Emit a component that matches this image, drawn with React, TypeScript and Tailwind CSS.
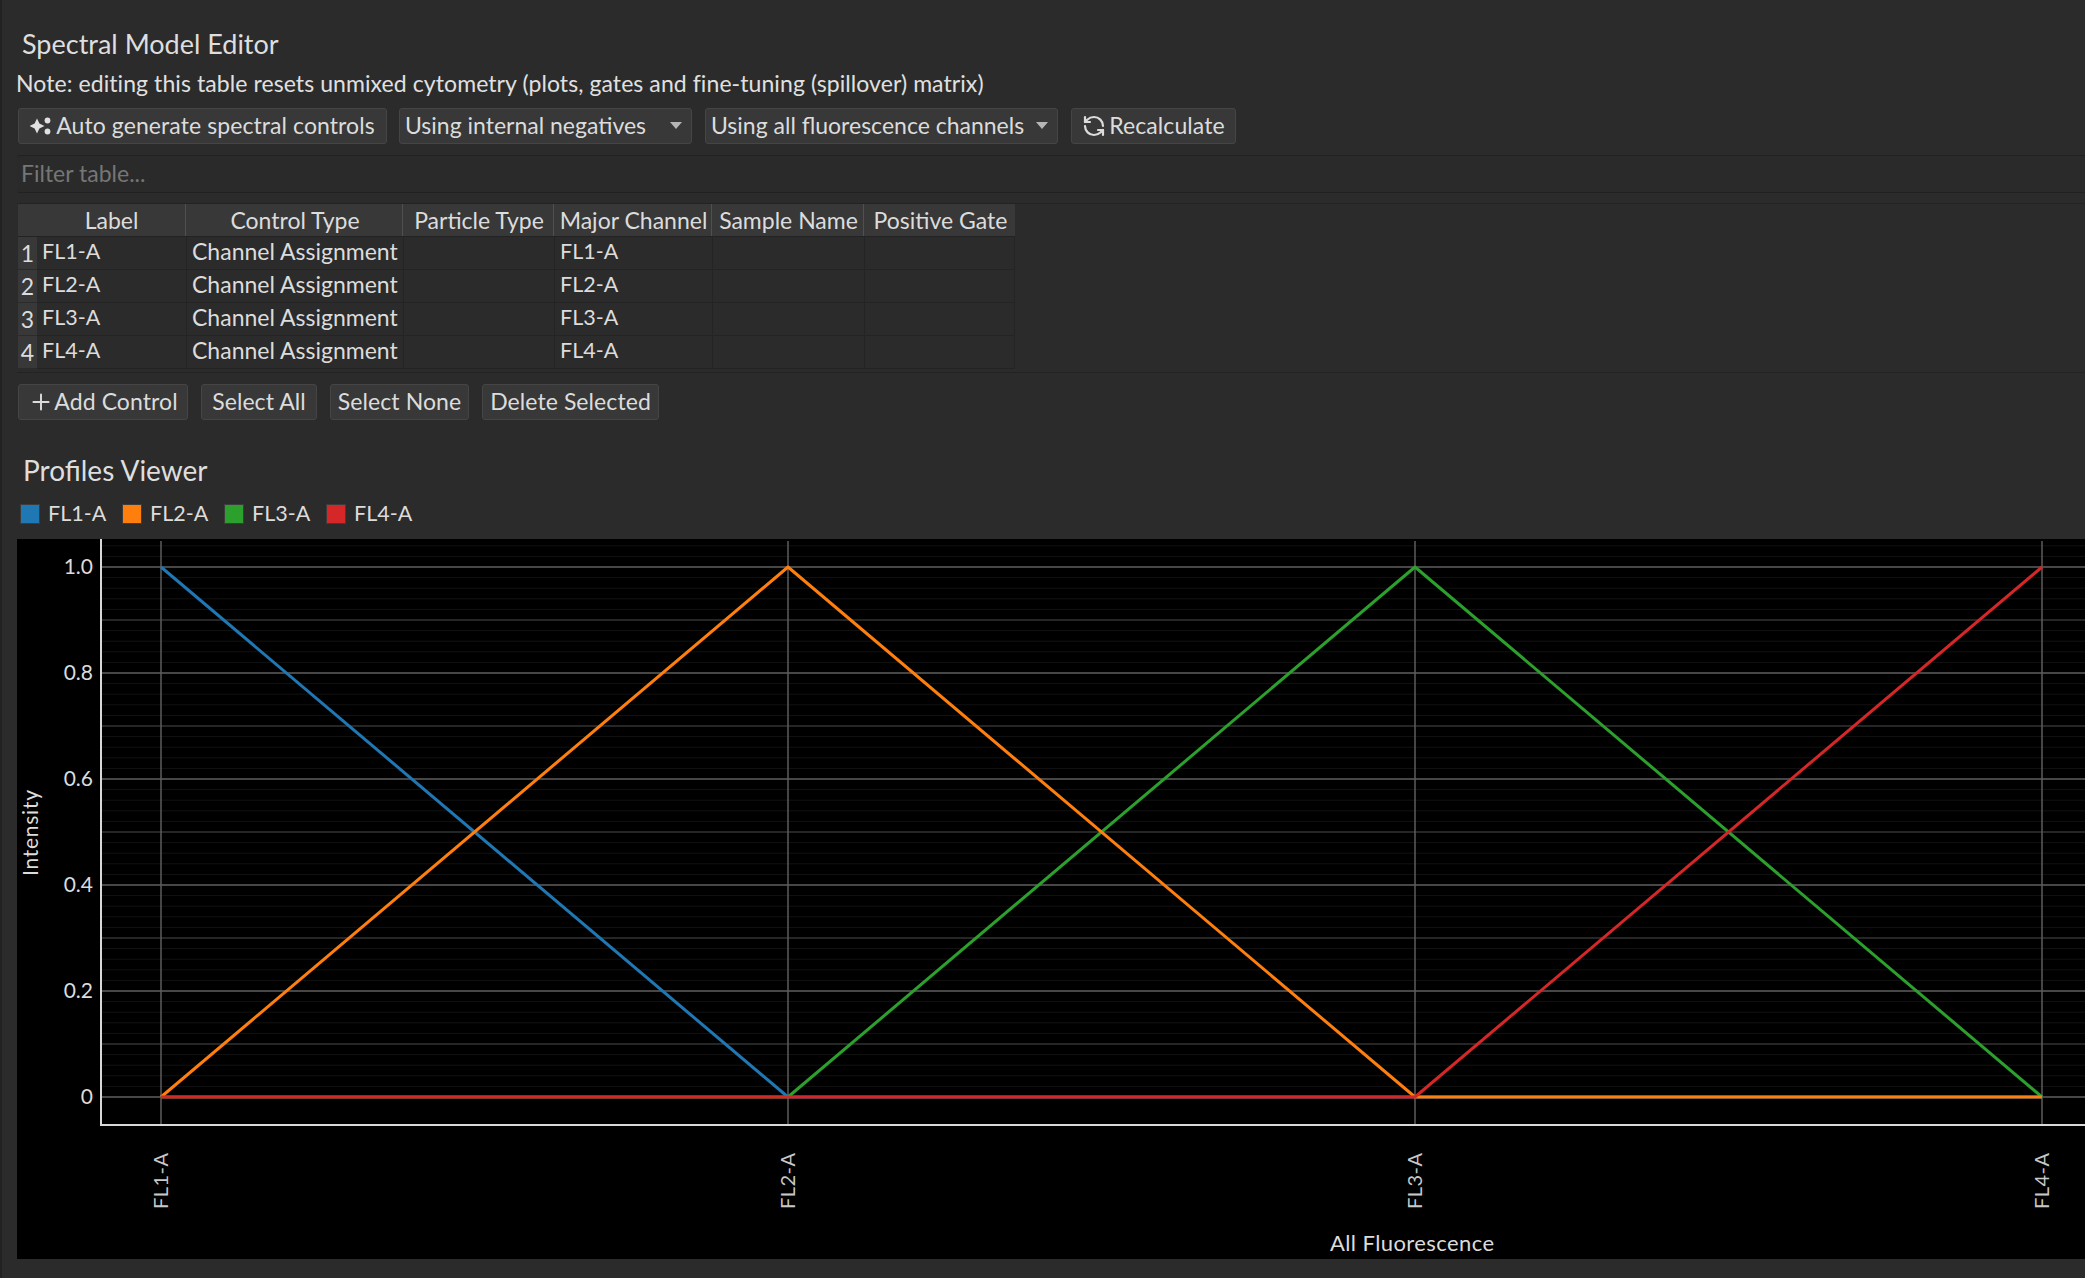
import { Plus, RefreshCcw } from "lucide-react";

const channels = ["FL1-A", "FL2-A", "FL3-A", "FL4-A"];
const colors = ["#1f77b4", "#ff7f0e", "#2ca02c", "#d62728"];

// plot geometry, in svg pixels
const xs = [144, 771, 1398, 2025];
const yOf = (v: number) => 558 - 530 * v;
const minorLines = Array.from({ length: 53 }, (_, i) => 28 - 21.2 + i * 10.6);
const midLines = [0.1, 0.3, 0.5, 0.7, 0.9];
const majorLines = [0, 0.2, 0.4, 0.6, 0.8, 1];
const yLabels = ["0", "0.2", "0.4", "0.6", "0.8", "1.0"];
// drawn in this order so the red and orange sit on top along zero
const series = [0, 2, 1, 3];

function ToolButton({ children, className }: { children: React.ReactNode; className: string }) {
  return (
    <button
      type="button"
      className={`flex items-center justify-center h-[36px] pb-[1px] rounded-[3px] bg-[#383838] border border-[#454545] text-[23px] leading-none tracking-[0.08px] text-[#dcdcdc] ${className}`}
    >
      {children}
    </button>
  );
}

function SelectButton({ label, className }: { label: string; className: string }) {
  return (
    <div
      className={`flex items-center justify-between h-[36px] pb-[1px] pl-[5px] pr-[9px] rounded-[3px] bg-[#383838] border border-[#454545] text-[23px] leading-none text-[#dcdcdc] ${className}`}
    >
      <span>{label}</span>
      <svg width="12" height="7" viewBox="0 0 12 7">
        <path d="M0 0h12L6 7z" fill="#b5b5b5" />
      </svg>
    </div>
  );
}

function SparkIcon() {
  return (
    <svg width="21" height="20" viewBox="0 0 21 20" fill="#e0e0e0" className="mr-[5px]">
      <path d="M7 2.5 9.4 7.6 14.5 10 9.4 12.4 7 17.5 4.6 12.4 -.5 10 4.6 7.6z" />
      <circle cx="17.5" cy="4.5" r="2.9" />
      <circle cx="17.5" cy="15.5" r="2.9" />
    </svg>
  );
}

function ProfilesPlot() {
  return (
    <svg viewBox="0 0 2068 720" className="block w-[2068px] h-[720px] bg-black">
      {minorLines.map((y) => (
        <line key={y} x1="83" x2="2068" y1={y} y2={y} stroke="#121212" strokeWidth="1" />
      ))}
      {midLines.map((v) => (
        <line key={v} x1="83" x2="2068" y1={yOf(v)} y2={yOf(v)} stroke="#303030" strokeWidth="1.5" />
      ))}
      {majorLines.map((v) => (
        <line key={v} x1="83" x2="2068" y1={yOf(v)} y2={yOf(v)} stroke="#5c5c5c" strokeWidth="1.5" />
      ))}
      {xs.map((x) => (
        <line key={x} x1={x} x2={x} y1="2" y2="586" stroke="#5c5c5c" strokeWidth="1.5" />
      ))}
      {series.map((s) => (
        <polyline
          key={s}
          fill="none"
          stroke={colors[s]}
          strokeWidth="3"
          strokeLinejoin="round"
          points={xs.map((x, i) => `${x},${yOf(i === s ? 1 : 0)}`).join(" ")}
        />
      ))}
      <path d="M84 0V586H2068" fill="none" stroke="#d8d8d8" strokeWidth="2" />
      {yLabels.map((label, i) => (
        <text key={label} x="76" y={yOf(i * 0.2) + 7} textAnchor="end" fontSize="21" fill="#dcdcdc">
          {label}
        </text>
      ))}
      {channels.map((c, i) => (
        <text
          key={c}
          transform={`translate(${xs[i] + 7} 670) rotate(-90)`}
          fontSize="20"
          fill="#c8c8c8"
          textLength="56"
        >
          {c}
        </text>
      ))}
      <text transform="translate(21 337) rotate(-90)" fontSize="21" fill="#dcdcdc" textLength="86">
        Intensity
      </text>
      <text x="1313" y="712" fontSize="22" fill="#dcdcdc" textLength="164">
        All Fluorescence
      </text>
    </svg>
  );
}

export default function App() {
  return (
    <div className="w-[2085px] h-[1278px] overflow-hidden bg-[#2b2b2b] border-l-2 border-[#222222] pl-[15px] font-['Lato',sans-serif] text-[#dcdcdc]">
      <p className="pt-[30px] pl-[5px] text-[27px] leading-[28px] text-[#dedede]">Spectral Model Editor</p>
      <p className="mt-[12px] -ml-[1px] text-[23px] leading-[26px] tracking-[0.08px] text-[#e0e0e0]">
        Note: editing this table resets unmixed cytometry (plots, gates and fine-tuning (spillover) matrix)
      </p>

      <div className="flex mt-[12px] pl-[1px]">
        <ToolButton className="w-[369px]">
          <SparkIcon />
          Auto generate spectral controls
        </ToolButton>
        <SelectButton label="Using internal negatives" className="ml-[12px] w-[293px]" />
        <SelectButton label="Using all fluorescence channels" className="ml-[13px] w-[353px]" />
        <ToolButton className="ml-[13px] w-[165px]">
          <RefreshCcw size={24} strokeWidth={2.2} className="mr-[3px]" />
          Recalculate
        </ToolButton>
      </div>

      <div className="flex items-center h-[38px] mt-[11px] pb-[1px] pl-[4px] border-y border-[#212121] bg-[#2a2a2a] text-[23px] text-[#767676] rounded-l-[3px]">
        Filter table...
      </div>

      <div className="mt-[10px] h-[170px] border-y border-[#232323] pl-[1px] text-[23px] leading-none">
        <div className="grid grid-cols-[18px_150px_217px_151px_158px_152px_151px] w-[997px] h-[33px] bg-[#383838] border-b border-[#232323]">
          <div />
          {["Label", "Control Type", "Particle Type", "Major Channel", "Sample Name", "Positive Gate"].map((h) => (
            <div key={h} className="flex items-center justify-center pl-[2px] border-r border-[#505050] last:border-r-0 whitespace-nowrap">
              {h}
            </div>
          ))}
        </div>
        {channels.map((c, i) => (
          <div key={c} className="grid grid-cols-[19px_150px_217px_151px_158px_152px_150px] w-[997px] h-[33px]">
            <div className="flex items-end justify-center pb-[4px] bg-[#383838] border-b border-[#2b2b2b]">{i + 1}</div>
            <div className="flex items-center pb-[2px] pl-[5px] border-r border-b border-[#242424] text-[21.5px]">{c}</div>
            <div className="flex items-center pb-[3px] pl-[5px] border-r border-b border-[#242424]">Channel Assignment</div>
            <div className="border-r border-b border-[#242424]" />
            <div className="flex items-center pb-[2px] pl-[5px] border-r border-b border-[#242424] text-[21.5px]">{c}</div>
            <div className="border-r border-b border-[#242424]" />
            <div className="border-r border-b border-[#242424]" />
          </div>
        ))}
      </div>

      <div className="flex mt-[11px] pl-[1px]">
        <ToolButton className="w-[170px]">
          <Plus size={26} strokeWidth={1.8} />
          Add Control
        </ToolButton>
        <ToolButton className="ml-[13px] w-[116px]">Select All</ToolButton>
        <ToolButton className="ml-[13px] w-[139px]">Select None</ToolButton>
        <ToolButton className="ml-[13px] w-[177px]">Delete Selected</ToolButton>
      </div>

      <p className="mt-[36px] pl-[6px] text-[28px] leading-[28px] text-[#dedede]">Profiles Viewer</p>

      <div className="flex items-center h-[20px] mt-[20px] pl-[3px] text-[21.5px] leading-none">
        {channels.map((c, i) => (
          <div key={c} className="flex items-center w-[102px]">
            <span style={{ backgroundColor: colors[i] }} className="w-[20px] h-[20px] border border-[#3c3c3c]" />
            <span className="ml-[8px] pb-[1px]">{c}</span>
          </div>
        ))}
      </div>

      <div className="mt-[15px]">
        <ProfilesPlot />
      </div>
    </div>
  );
}
